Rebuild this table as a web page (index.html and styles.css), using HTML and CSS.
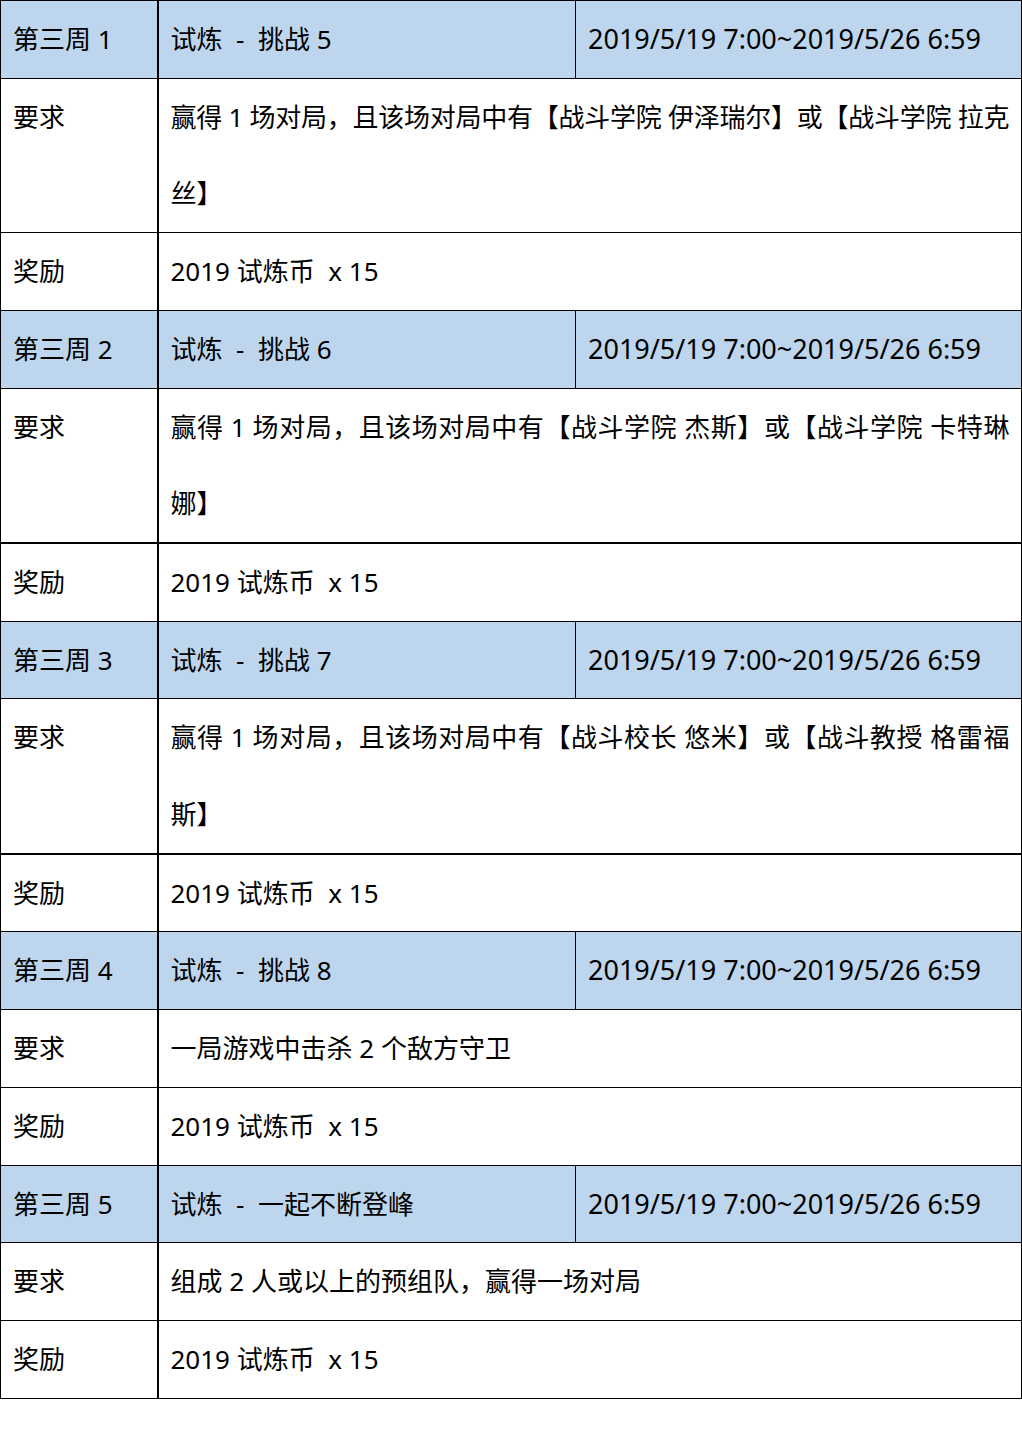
FILE: index.html
```html
<!DOCTYPE html>
<html lang="zh-CN">
<head>
<meta charset="utf-8">
<link rel="stylesheet" href="styles.css">
</head>
<body>
<table class="tbl">
  <colgroup>
    <col class="c1"><col class="c2"><col class="c3">
  </colgroup>
  <tr class="hd"><td class="lab">第三周 1</td><td>试炼&nbsp; -&nbsp; 挑战 5</td><td class="date">2019/5/19 7:00~2019/5/26 6:59</td></tr>
  <tr><td class="lab">要求</td><td colspan="2"><span class="jl">赢得 1 场对局，且该场对局中有【战斗学院 伊泽瑞尔】或【战斗学院 拉克</span><span class="ln">丝】</span></td></tr>
  <tr><td class="lab">奖励</td><td colspan="2">2019 试炼币&nbsp; x 15</td></tr>

  <tr class="hd"><td class="lab">第三周 2</td><td>试炼&nbsp; -&nbsp; 挑战 6</td><td class="date">2019/5/19 7:00~2019/5/26 6:59</td></tr>
  <tr class="thick"><td class="lab">要求</td><td colspan="2"><span class="jl">赢得 1 场对局，且该场对局中有【战斗学院 杰斯】或【战斗学院 卡特琳</span><span class="ln">娜】</span></td></tr>
  <tr><td class="lab">奖励</td><td colspan="2">2019 试炼币&nbsp; x 15</td></tr>

  <tr class="hd"><td class="lab">第三周 3</td><td>试炼&nbsp; -&nbsp; 挑战 7</td><td class="date">2019/5/19 7:00~2019/5/26 6:59</td></tr>
  <tr class="thick"><td class="lab">要求</td><td colspan="2"><span class="jl">赢得 1 场对局，且该场对局中有【战斗校长 悠米】或【战斗教授 格雷福</span><span class="ln">斯】</span></td></tr>
  <tr><td class="lab">奖励</td><td colspan="2">2019 试炼币&nbsp; x 15</td></tr>

  <tr class="hd"><td class="lab">第三周 4</td><td>试炼&nbsp; -&nbsp; 挑战 8</td><td class="date">2019/5/19 7:00~2019/5/26 6:59</td></tr>
  <tr><td class="lab">要求</td><td colspan="2">一局游戏中击杀 2 个敌方守卫</td></tr>
  <tr><td class="lab">奖励</td><td colspan="2">2019 试炼币&nbsp; x 15</td></tr>

  <tr class="hd"><td class="lab">第三周 5</td><td>试炼&nbsp; -&nbsp; 一起不断登峰</td><td class="date">2019/5/19 7:00~2019/5/26 6:59</td></tr>
  <tr><td class="lab">要求</td><td colspan="2">组成 2 人或以上的预组队，赢得一场对局</td></tr>
  <tr><td class="lab">奖励</td><td colspan="2">2019 试炼币&nbsp; x 15</td></tr>
</table>
</body>
</html>
```
FILE: styles.css
```css
html, body {
  margin: 0;
  padding: 0;
  background: #ffffff;
}
body {
  font-family: "Noto Sans", "Noto Sans CJK SC", sans-serif;
  font-size: 26px;
  color: #000;
}
.tbl {
  border-collapse: collapse;
  table-layout: fixed;
  width: 1021px;
}
.c1 { width: 157px; }
.c2 { width: 418px; }
.c3 { width: 446px; }
.tbl td {
  border: 1px solid #000;
  padding: 0 11px 0 12px;
  line-height: 76.7px;
  vertical-align: top;
  white-space: nowrap;
  overflow: hidden;
}
.tbl td.lab {
  border-right: 2px solid #000;
}
.tbl td.date {
  font-size: 27px;
}
.tbl tr.thick td {
  border-bottom: 2px solid #000;
}
.hd td {
  background: #bdd6ee;
}
.jl {
  display: block;
  letter-spacing: -0.4px;
  text-align: justify;
  text-align-last: justify;
  white-space: nowrap;
  margin-right: 1px;
}
.ln {
  display: block;
}
```
